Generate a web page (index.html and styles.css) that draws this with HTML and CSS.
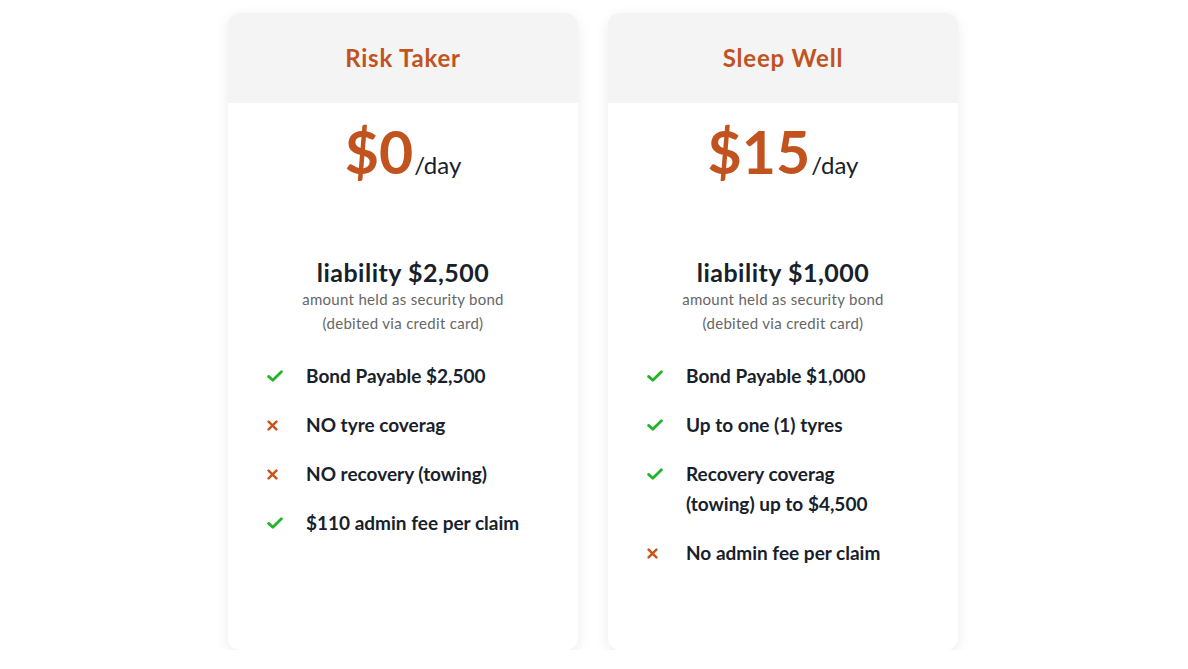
FILE: index.html
```html
<!DOCTYPE html>
<html>
<head>
<meta charset="utf-8">
<link rel="stylesheet" href="styles.css">
</head>
<body>
<div class="plans">
  <div class="card">
    <div class="card-head"><h2 class="title">Risk Taker</h2></div>
    <div class="price"><span class="amount">$0</span><span class="per">/day</span></div>
    <div class="liability">
      <div class="liab-title">liability $2,500</div>
      <div class="liab-sub">amount held as security bond<br>(debited via credit card)</div>
    </div>
    <ul class="features">
      <li class="feat"><span class="ico yes"><svg viewBox="0 0 16 12" width="16" height="12"><path d="M1.6 6.4 L5.8 10.2 L14.4 1.8" fill="none" stroke="currentColor" stroke-width="2.8" stroke-linecap="round" stroke-linejoin="round"/></svg></span><span class="feat-text">Bond Payable $2,500</span></li>
      <li class="feat"><span class="ico no"><svg viewBox="0 0 11 11" width="11" height="11"><path d="M1.6 1.6 L9.4 9.4 M9.4 1.6 L1.6 9.4" fill="none" stroke="currentColor" stroke-width="2.5" stroke-linecap="round"/></svg></span><span class="feat-text">NO tyre coverag</span></li>
      <li class="feat"><span class="ico no"><svg viewBox="0 0 11 11" width="11" height="11"><path d="M1.6 1.6 L9.4 9.4 M9.4 1.6 L1.6 9.4" fill="none" stroke="currentColor" stroke-width="2.5" stroke-linecap="round"/></svg></span><span class="feat-text">NO recovery (towing)</span></li>
      <li class="feat"><span class="ico yes"><svg viewBox="0 0 16 12" width="16" height="12"><path d="M1.6 6.4 L5.8 10.2 L14.4 1.8" fill="none" stroke="currentColor" stroke-width="2.8" stroke-linecap="round" stroke-linejoin="round"/></svg></span><span class="feat-text">$110 admin fee per claim</span></li>
    </ul>
  </div>
  <div class="card">
    <div class="card-head"><h2 class="title">Sleep Well</h2></div>
    <div class="price"><span class="amount">$15</span><span class="per">/day</span></div>
    <div class="liability">
      <div class="liab-title">liability $1,000</div>
      <div class="liab-sub">amount held as security bond<br>(debited via credit card)</div>
    </div>
    <ul class="features">
      <li class="feat"><span class="ico yes"><svg viewBox="0 0 16 12" width="16" height="12"><path d="M1.6 6.4 L5.8 10.2 L14.4 1.8" fill="none" stroke="currentColor" stroke-width="2.8" stroke-linecap="round" stroke-linejoin="round"/></svg></span><span class="feat-text">Bond Payable $1,000</span></li>
      <li class="feat"><span class="ico yes"><svg viewBox="0 0 16 12" width="16" height="12"><path d="M1.6 6.4 L5.8 10.2 L14.4 1.8" fill="none" stroke="currentColor" stroke-width="2.8" stroke-linecap="round" stroke-linejoin="round"/></svg></span><span class="feat-text">Up to one (1) tyres</span></li>
      <li class="feat"><span class="ico yes"><svg viewBox="0 0 16 12" width="16" height="12"><path d="M1.6 6.4 L5.8 10.2 L14.4 1.8" fill="none" stroke="currentColor" stroke-width="2.8" stroke-linecap="round" stroke-linejoin="round"/></svg></span><span class="feat-text">Recovery coverag<br>(towing) up to $4,500</span></li>
      <li class="feat"><span class="ico no"><svg viewBox="0 0 11 11" width="11" height="11"><path d="M1.6 1.6 L9.4 9.4 M9.4 1.6 L1.6 9.4" fill="none" stroke="currentColor" stroke-width="2.5" stroke-linecap="round"/></svg></span><span class="feat-text">No admin fee per claim</span></li>
    </ul>
  </div>
</div>
</body>
</html>
```

FILE: styles.css
```css
html, body {
  margin: 0;
  padding: 0;
  background: #ffffff;
}
body {
  font-family: Lato, "Open Sans", "Liberation Sans", sans-serif;
  color: #18212b;
}
.plans {
  display: flex;
  justify-content: center;
  gap: 30px;
  padding: 13px 2px 0 0;
}
.card {
  width: 350px;
  height: 637px;
  background: #fff;
  border-radius: 12px;
  overflow: hidden;
  box-shadow: 0 4px 14px rgba(0, 0, 0, 0.08);
  display: flex;
  flex-direction: column;
}
.card-head {
  height: 90px;
  background: #f4f4f4;
  display: flex;
  align-items: center;
  justify-content: center;
}
.title {
  margin: 0 0 2px;
  font-size: 24px;
  font-weight: 700;
  letter-spacing: 0.8px;
  color: #c0531f;
}
.price {
  display: flex;
  justify-content: center;
  align-items: baseline;
  padding-top: 14px;
  height: 70px;
}
.amount {
  font-size: 59px;
  font-weight: 700;
  color: #c1541e;
  line-height: 70px;
}
.per {
  font-size: 24px;
  color: #18212b;
  margin-left: 1px;
}
.liability {
  text-align: center;
  margin-top: 70px;
}
.liab-title {
  font-size: 25px;
  font-weight: 700;
  letter-spacing: 0.5px;
  line-height: 30px;
}
.liab-sub {
  font-size: 15px;
  letter-spacing: 0.3px;
  color: #666;
  line-height: 24px;
}
.features {
  list-style: none;
  margin: 26px 0 0;
  padding: 0 0 0 39px;
  display: flex;
  flex-direction: column;
  gap: 19px;
}
.feat {
  display: flex;
  align-items: flex-start;
  font-size: 19px;
  font-weight: 700;
  line-height: 30px;
}
.ico {
  width: 39px;
  flex: none;
  height: 30px;
  display: flex;
  align-items: center;
  justify-content: flex-start;
}
.ico.yes { color: #22b52a; }
.ico.no { color: #c8561f; }
```
